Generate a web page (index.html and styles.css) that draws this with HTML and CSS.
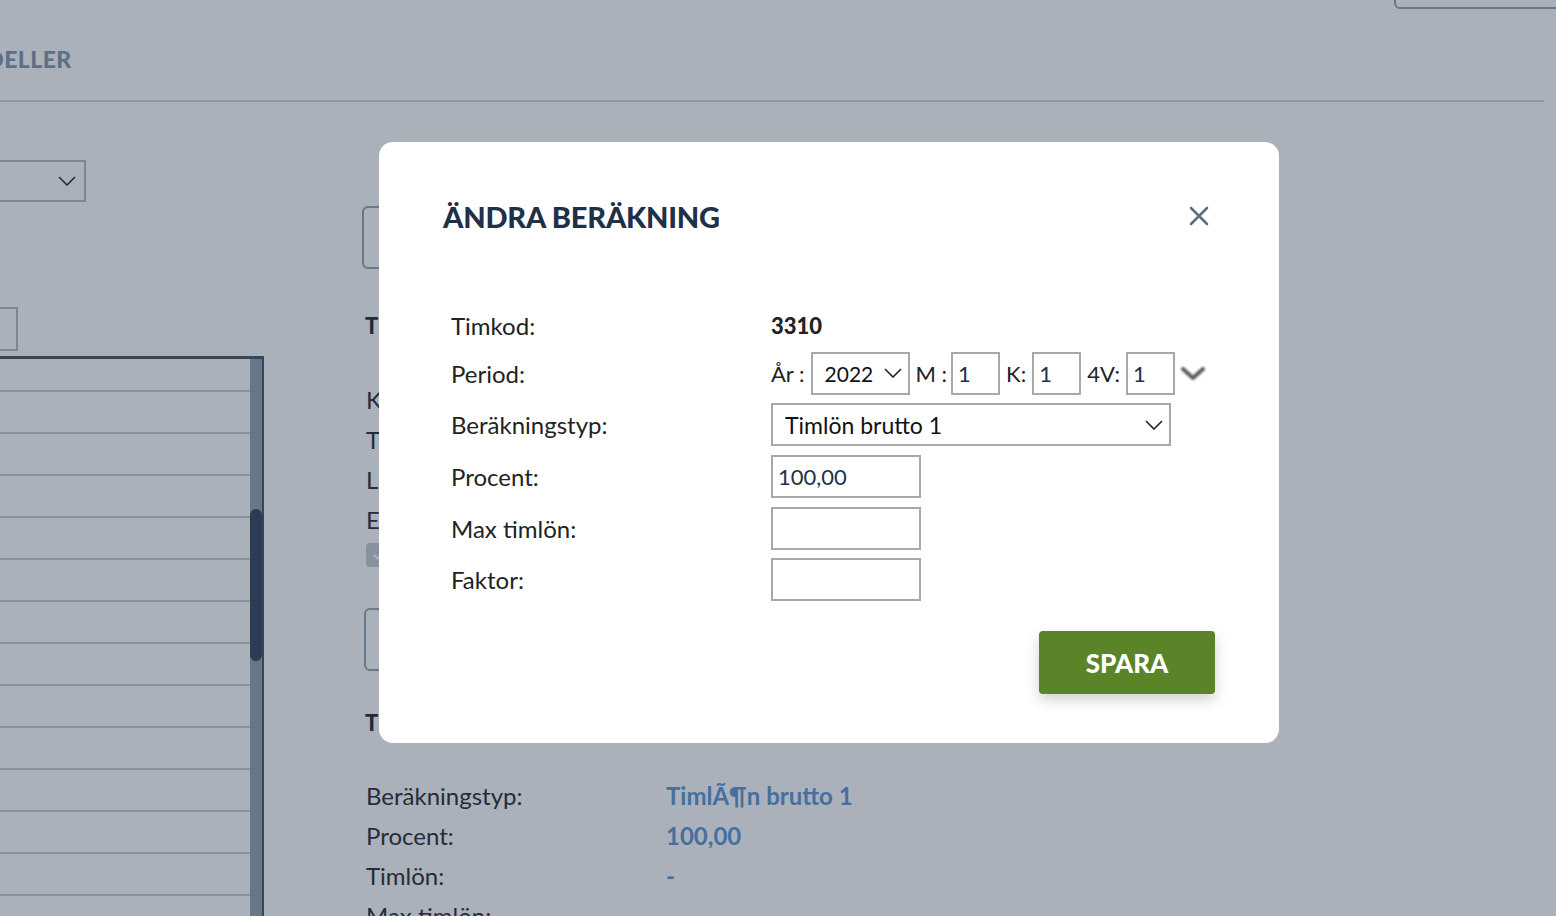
FILE: index.html
```html
<!DOCTYPE html>
<html>
  <head>
    <meta charset="utf-8">
    <meta name="viewport" content="width=device-width, initial-scale=1">
    <title>Ändra beräkning</title>
    <link rel="stylesheet" href="styles.css">
  </head>
  <body>
    <div class="page">
      <!-- Header with tabs -->
      <header class="header">
        <div class="top-actions">
          <div class="outline-btn"></div>
        </div>
        <div class="tabs">
          <span class="tab">MODELLER</span>
        </div>
      </header>

      <div class="content">
        <!-- Left column: model picker + list -->
        <div class="left-col">
          <div class="picker">
            <svg width="18" height="10" viewBox="0 0 18 10" fill="none" stroke="#222" stroke-width="1.6">
              <path d="M1 1l8 8 8-8"></path>
            </svg>
          </div>
          <div class="search-box"></div>
          <div class="list">
            <div class="list-rows">
              <div class="list-row"></div>
              <div class="list-row"></div>
              <div class="list-row"></div>
              <div class="list-row"></div>
              <div class="list-row"></div>
              <div class="list-row"></div>
              <div class="list-row"></div>
              <div class="list-row"></div>
              <div class="list-row"></div>
              <div class="list-row"></div>
              <div class="list-row"></div>
              <div class="list-row"></div>
              <div class="list-row"></div>
              <div class="list-row"></div>
            </div>
            <div class="scrollbar">
              <div class="thumb"></div>
            </div>
          </div>
        </div>

        <!-- Middle column: details -->
        <div class="mid-col">
          <div class="outline-box"></div>
          <div class="section-title">T</div>
          <div class="detail-lines">
            <div>K</div>
            <div>T</div>
            <div>L</div>
            <div>E</div>
          </div>
          <div class="check">
            <svg width="12" height="10" viewBox="0 0 12 10" fill="none" stroke="#fff" stroke-width="2">
              <path d="M1 5l3.5 3.5L11 1.5"></path>
            </svg>
          </div>
          <div class="outline-box second"></div>
          <div class="section-title lower">T</div>
          <div class="calc-table">
            <span>Beräkningstyp:</span><span class="val">TimlÃ¶n brutto 1</span>
            <span>Procent:</span><span class="val">100,00</span>
            <span>Timlön:</span><span class="val">-</span>
            <span>Max timlön:</span><span class="val">-</span>
          </div>
        </div>
      </div>
    </div>

    <!-- Dim layer -->
    <div class="backdrop"></div>

    <!-- Modal -->
    <div class="modal">
      <div class="modal-head">
        <h2>ÄNDRA BERÄKNING</h2>
        <svg class="close" width="20" height="20" viewBox="0 0 20 20" fill="none" stroke="#5d7088" stroke-width="2.6" stroke-linecap="round">
          <path d="M2 2l16 16M18 2L2 18"></path>
        </svg>
      </div>

      <div class="form">
        <label>Timkod:</label>
        <div class="field"><strong class="code">3310</strong></div>

        <label>Period:</label>
        <div class="field period">
          <span>År :</span>
          <div class="select year">
            <span>2022</span>
            <svg width="18" height="10" viewBox="0 0 18 10" fill="none" stroke="#222" stroke-width="1.6">
              <path d="M1 1l8 8 8-8"></path>
            </svg>
          </div>
          <span class="lbl-m">M :</span>
          <div class="input small">1</div>
          <span>K:</span>
          <div class="input small">1</div>
          <span>4V:</span>
          <div class="input small">1</div>
          <svg class="expand" width="26" height="16" viewBox="0 0 26 16" fill="none" stroke="#5c5c5c" stroke-width="4" stroke-linecap="round" stroke-linejoin="round">
            <path d="M3 4l10 9 10-9"></path>
          </svg>
        </div>

        <label>Beräkningstyp:</label>
        <div class="field">
          <div class="select wide">
            <span>Timlön brutto 1</span>
            <svg width="18" height="10" viewBox="0 0 18 10" fill="none" stroke="#222" stroke-width="1.6">
              <path d="M1 1l8 8 8-8"></path>
            </svg>
          </div>
        </div>

        <label>Procent:</label>
        <div class="field"><div class="input">100,00</div></div>

        <label>Max timlön:</label>
        <div class="field"><div class="input"></div></div>

        <label>Faktor:</label>
        <div class="field"><div class="input"></div></div>
      </div>

      <div class="modal-foot">
        <button class="save">SPARA</button>
      </div>
    </div>
  </body>
</html>
```

FILE: styles.css
```css
body, html {
  margin: 0;
  padding: 0;
  height: 100%;
  width: 100%;
  overflow: hidden;
  background-color: #fff;
  font-family: Lato, "Noto Sans", sans-serif;
  color: #222;
}

.page {
  margin-left: -140px;
  width: 1696px;
}

/* Header */
.header {
  height: 100px;
  margin-right: 12px;
  border-bottom: 2px solid #cbd4df;
  display: flex;
  flex-direction: column;
}

.top-actions {
  display: flex;
  justify-content: flex-end;
  height: 8px;
  margin-right: -24px;
}

.outline-btn {
  width: 170px;
  height: 40px;
  margin-top: -35px;
  border: 2px solid #8ea0b1;
  border-radius: 6px;
}

.tabs {
  display: flex;
  padding-left: 85px;
  margin-top: 37px;
}

.tab {
  font-size: 23px;
  font-weight: 900;
  letter-spacing: 0.4px;
  color: #8293a5;
}

/* Main */
.content {
  display: flex;
  gap: 98px;
}

.left-col {
  width: 404px;
  display: flex;
  flex-direction: column;
  align-items: flex-end;
}

.picker {
  width: 280px;
  height: 38px;
  margin-top: 58px;
  margin-right: 178px;
  border: 2px solid #b4b6b9;
  display: flex;
  align-items: center;
  justify-content: flex-end;
  padding-right: 8px;
}

.search-box {
  width: 100px;
  height: 40px;
  margin-top: 105px;
  margin-right: 246px;
  border: 2px solid #b4b6b9;
}

.list {
  width: 400px;
  height: 620px;
  margin-top: 5px;
  border-top: 3px solid #464a50;
  border-right: 2px solid #464a50;
  display: flex;
}

.list-rows {
  flex: 1;
  padding-top: 31px;
}

.list-row {
  height: 40px;
  border-top: 2px solid #c6cad0;
}

.scrollbar {
  width: 12px;
  background: #8e9eac;
  padding-top: 150px;
}

.thumb {
  height: 152px;
  border-radius: 6px;
  background: #2a3f55;
}

.mid-col {
  width: 700px;
  display: flex;
  flex-direction: column;
  align-items: flex-start;
}

.outline-box {
  width: 400px;
  height: 59px;
  margin-top: 104px;
  border: 2px solid #8ea0b1;
  border-radius: 6px;
}

.outline-box.second {
  margin-top: 41px;
  margin-left: 2px;
}

.section-title {
  font-size: 22px;
  font-weight: 900;
  color: #1a1f2b;
  margin-top: 42px;
  margin-left: 3px;
  line-height: 30px;
}

.section-title.lower {
  margin-top: 37px;
}

.detail-lines {
  margin-top: 39px;
  margin-left: 4px;
  font-size: 24px;
  line-height: 40px;
}

.check {
  width: 26px;
  height: 24px;
  margin-left: 4px;
  margin-top: 3px;
  border-radius: 4px;
  background: #c6cad0;
  display: flex;
  align-items: center;
  justify-content: center;
}

.calc-table {
  margin-top: 38px;
  margin-left: 4px;
  display: grid;
  grid-template-columns: 300px auto;
  font-size: 24px;
  line-height: 40px;
}

.calc-table .val {
  color: #5892d0;
  font-weight: 700;
  font-size: 24px;
}

/* Dim layer over the page */
.backdrop {
  position: fixed;
  inset: 0;
  background: rgba(43, 61, 86, 0.4);
}

/* Modal */
.modal {
  position: fixed;
  left: 379px;
  top: 142px;
  width: 900px;
  box-sizing: border-box;
  padding: 57px 64px 49px 64px;
  background: #fff;
  border-radius: 14px;
}

.modal-head {
  display: flex;
  align-items: center;
  justify-content: space-between;
  height: 34px;
}

.modal-head h2 {
  margin: 0;
  font-size: 29px;
  font-weight: 900;
  color: #1f3049;
  letter-spacing: -0.2px;
}

.close {
  margin-right: 6px;
}

.form {
  margin-top: 74px;
  padding-left: 8px;
  display: grid;
  grid-template-columns: 320px 1fr;
  grid-template-rows: 36px repeat(5, 43px);
  row-gap: 8.7px;
  align-items: center;
  font-size: 22px;
}

.form label {
  color: #222;
  font-size: 24px;
}

.field {
  display: flex;
  align-items: center;
  height: 100%;
}

.code {
  font-weight: 900;
  color: #222;
}

.period {
  gap: 6px;
}

.period .lbl-m {
  margin-right: -2px;
}

.select {
  box-sizing: border-box;
  height: 43px;
  border: 2px solid #a8a8a8;
  display: flex;
  align-items: center;
  justify-content: space-between;
  color: #111;
}

.select.year {
  width: 99px;
  padding: 0 6px 0 12px;
  font-size: 21px;
}

.select.wide {
  width: 400px;
  padding: 0 6px 0 12px;
  font-size: 23px;
}

.input {
  box-sizing: border-box;
  width: 150px;
  height: 43px;
  border: 2px solid #a8a8a8;
  padding-left: 5px;
  display: flex;
  align-items: center;
  color: #1f3049;
}

.input.small {
  width: 49px;
}

.expand {
  margin-left: -1px;
  filter: blur(0.8px);
}

.modal-foot {
  display: flex;
  justify-content: flex-end;
  margin-top: 30px;
}

.save {
  width: 176px;
  height: 63px;
  border: none;
  border-radius: 4px;
  background: #5a8427;
  color: #fff;
  font-family: Lato, "Noto Sans", sans-serif;
  font-size: 26px;
  font-weight: 900;
  box-shadow: 0 6px 14px rgba(0, 0, 0, 0.18);
  cursor: pointer;
}
```
